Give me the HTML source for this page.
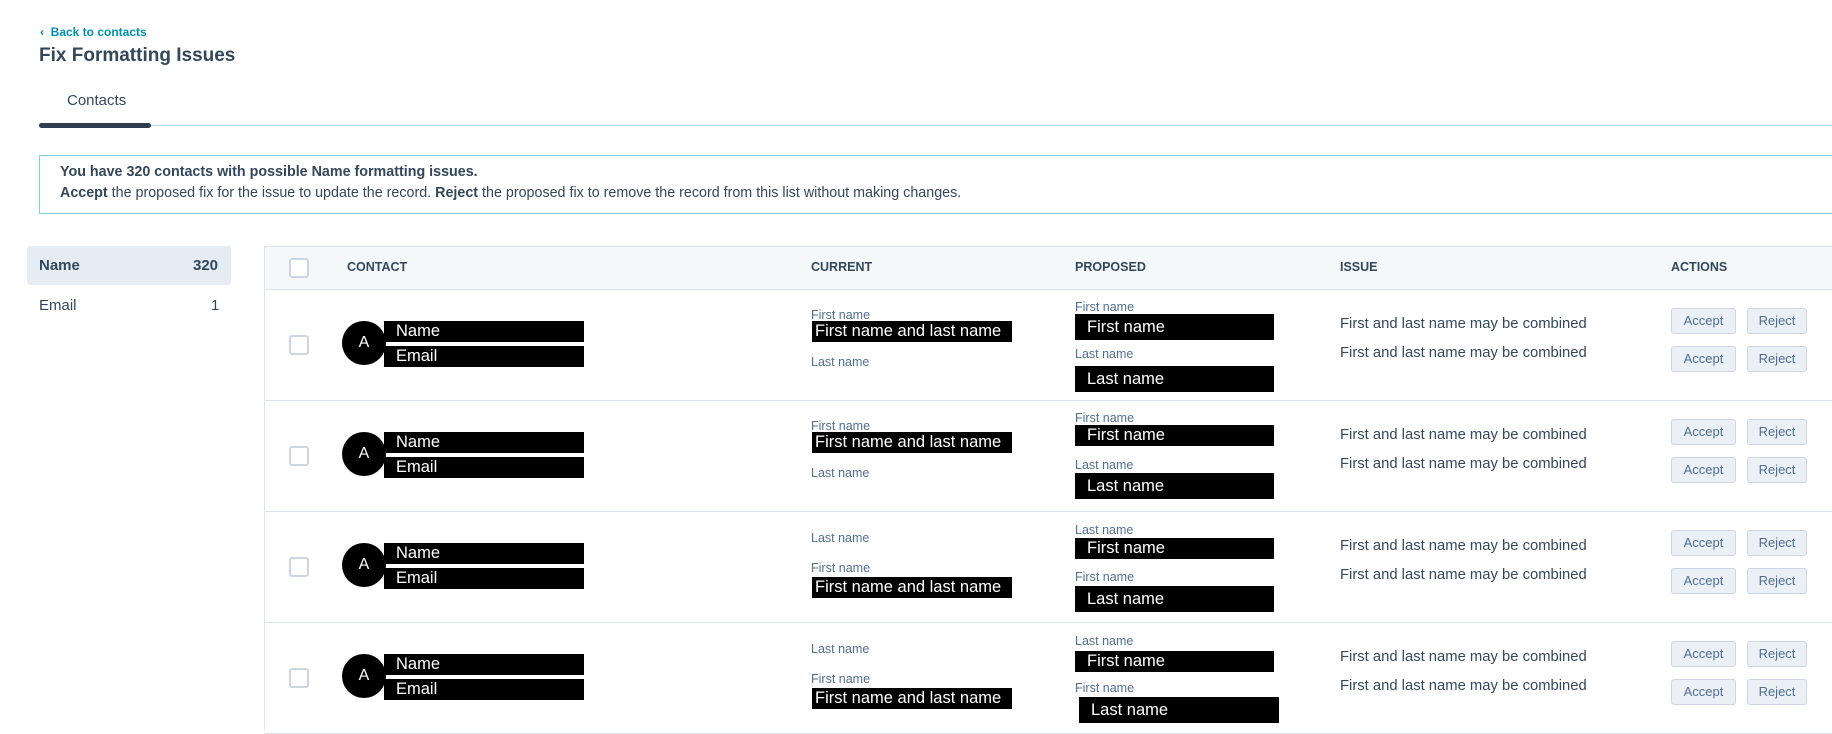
<!DOCTYPE html>
<html><head><meta charset="utf-8"><style>
*{margin:0;padding:0;box-sizing:border-box}
body{width:1832px;height:728px;overflow:hidden;background:#fff;font-family:"Liberation Sans",sans-serif;color:#33475b;position:relative}
.a{position:absolute;white-space:nowrap}
.lbl{font-size:12.5px;color:#516f90}
.blk{position:absolute;background:#000;color:#fff;font-size:16.5px;line-height:21px;padding-left:12px}
.iss{font-size:14.8px}
.btn{position:absolute;background:#eaf0f6;border:1px solid #cbd6e2;border-radius:3px;font-size:13px;color:#506e91;text-align:center;line-height:24px;height:26px}
.cb{position:absolute;width:20px;height:20px;border:2px solid #cbd6e2;border-radius:3px;background:#fff}
.row{position:absolute;left:264px;width:1568px;height:111px;border-bottom:1px solid #dfe3eb}
.av{position:absolute;left:78px;width:44px;height:44px;border-radius:50%;background:#000;color:#fff;font-size:16px;text-align:center;line-height:44px}
</style></head><body>
<div class="a" style="left:40px;top:25px;font-size:12px;color:#0091ae;font-weight:bold">‹&nbsp;&nbsp;Back to contacts</div>
<div class="a" style="left:39px;top:45px;font-size:19px;font-weight:bold;color:#33475b">Fix Formatting Issues</div>
<div class="a" style="left:67px;top:92px;font-size:15px">Contacts</div>
<div class="a" style="left:39px;top:125px;width:1793px;height:1px;background:#b0d9e3"></div>
<div class="a" style="left:39px;top:123px;width:112px;height:5px;border-radius:3px;background:#2d3e50"></div>
<div class="a" style="left:39px;top:155px;width:1800px;height:59px;border:1px solid #7fd1de"></div>
<div class="a" style="left:60px;top:164px;font-size:14.3px;font-weight:bold">You have 320 contacts with possible Name formatting issues.</div>
<div class="a" style="left:60px;top:185px;font-size:14.3px"><b>Accept</b> the proposed fix for the issue to update the record. <b>Reject</b> the proposed fix to remove the record from this list without making changes.</div>
<div class="a" style="left:27px;top:246px;width:204px;height:39px;background:#e5ecf3;border-radius:3px"></div>
<div class="a" style="left:39px;top:257px;font-size:15px;font-weight:bold">Name</div>
<div class="a" style="left:193px;top:257px;font-size:15px;font-weight:bold">320</div>
<div class="a" style="left:39px;top:297px;font-size:15px">Email</div>
<div class="a" style="left:211px;top:297px;font-size:15px">1</div>
<div class="a" style="left:264px;top:246px;width:1568px;height:44px;background:#f5f8fa;border:1px solid #dfe3eb;border-right:none"></div>
<div class="a" style="left:264px;top:290px;width:1px;height:440px;background:#dfe3eb"></div>
<div class="cb" style="left:289px;top:258px"></div>
<div class="a" style="left:347px;top:260px;font-size:12.5px;font-weight:bold">CONTACT</div>
<div class="a" style="left:811px;top:260px;font-size:12.5px;font-weight:bold">CURRENT</div>
<div class="a" style="left:1075px;top:260px;font-size:12.5px;font-weight:bold">PROPOSED</div>
<div class="a" style="left:1340px;top:260px;font-size:12.5px;font-weight:bold">ISSUE</div>
<div class="a" style="left:1671px;top:260px;font-size:12.5px;font-weight:bold">ACTIONS</div>

<!-- row 1 -->
<div class="row" style="top:290px">
<div class="cb" style="left:25px;top:45px"></div>
<div class="av" style="top:31px">A</div>
<div class="blk" style="left:120px;top:31px;width:200px">Name</div>
<div class="blk" style="left:120px;top:56px;width:200px">Email</div>
<div class="a lbl" style="left:547px;top:18px">First name</div>
<div class="blk" style="left:548px;top:31px;width:200px;padding-left:3px">First name and last name</div>
<div class="a lbl" style="left:547px;top:65px">Last name</div>
<div class="a lbl" style="left:811px;top:10px">First name</div>
<div class="blk" style="left:811px;top:24px;width:199px;line-height:26px">First name</div>
<div class="a lbl" style="left:811px;top:57px">Last name</div>
<div class="blk" style="left:811px;top:76px;width:199px;line-height:26px">Last name</div>
<div class="a iss" style="left:1076px;top:26px">First and last name may be combined</div>
<div class="a iss" style="left:1076px;top:55px">First and last name may be combined</div>
<div class="btn" style="left:1407px;top:18px;width:65px">Accept</div><div class="btn" style="left:1483px;top:18px;width:60px">Reject</div>
<div class="btn" style="left:1407px;top:56px;width:65px">Accept</div><div class="btn" style="left:1483px;top:56px;width:60px">Reject</div>
</div>
<!-- row 2 -->
<div class="row" style="top:401px">
<div class="cb" style="left:25px;top:45px"></div>
<div class="av" style="top:31px">A</div>
<div class="blk" style="left:120px;top:31px;width:200px">Name</div>
<div class="blk" style="left:120px;top:56px;width:200px">Email</div>
<div class="a lbl" style="left:547px;top:18px">First name</div>
<div class="blk" style="left:548px;top:31px;width:200px;padding-left:3px">First name and last name</div>
<div class="a lbl" style="left:547px;top:65px">Last name</div>
<div class="a lbl" style="left:811px;top:10px">First name</div>
<div class="blk" style="left:811px;top:24px;width:199px">First name</div>
<div class="a lbl" style="left:811px;top:57px">Last name</div>
<div class="blk" style="left:811px;top:72px;width:199px;line-height:26px">Last name</div>
<div class="a iss" style="left:1076px;top:26px">First and last name may be combined</div>
<div class="a iss" style="left:1076px;top:55px">First and last name may be combined</div>
<div class="btn" style="left:1407px;top:18px;width:65px">Accept</div><div class="btn" style="left:1483px;top:18px;width:60px">Reject</div>
<div class="btn" style="left:1407px;top:56px;width:65px">Accept</div><div class="btn" style="left:1483px;top:56px;width:60px">Reject</div>
</div>
<!-- row 3 -->
<div class="row" style="top:512px">
<div class="cb" style="left:25px;top:45px"></div>
<div class="av" style="top:31px">A</div>
<div class="blk" style="left:120px;top:31px;width:200px">Name</div>
<div class="blk" style="left:120px;top:56px;width:200px">Email</div>
<div class="a lbl" style="left:547px;top:19px">Last name</div>
<div class="a lbl" style="left:547px;top:49px">First name</div>
<div class="blk" style="left:548px;top:65px;width:200px;padding-left:3px">First name and last name</div>
<div class="a lbl" style="left:811px;top:11px">Last name</div>
<div class="blk" style="left:811px;top:26px;width:199px">First name</div>
<div class="a lbl" style="left:811px;top:58px">First name</div>
<div class="blk" style="left:811px;top:74px;width:199px;line-height:26px">Last name</div>
<div class="a iss" style="left:1076px;top:26px">First and last name may be combined</div>
<div class="a iss" style="left:1076px;top:55px">First and last name may be combined</div>
<div class="btn" style="left:1407px;top:18px;width:65px">Accept</div><div class="btn" style="left:1483px;top:18px;width:60px">Reject</div>
<div class="btn" style="left:1407px;top:56px;width:65px">Accept</div><div class="btn" style="left:1483px;top:56px;width:60px">Reject</div>
</div>
<!-- row 4 -->
<div class="row" style="top:623px">
<div class="cb" style="left:25px;top:45px"></div>
<div class="av" style="top:31px">A</div>
<div class="blk" style="left:120px;top:31px;width:200px">Name</div>
<div class="blk" style="left:120px;top:56px;width:200px">Email</div>
<div class="a lbl" style="left:547px;top:19px">Last name</div>
<div class="a lbl" style="left:547px;top:49px">First name</div>
<div class="blk" style="left:548px;top:65px;width:200px;padding-left:3px">First name and last name</div>
<div class="a lbl" style="left:811px;top:11px">Last name</div>
<div class="blk" style="left:811px;top:28px;width:199px">First name</div>
<div class="a lbl" style="left:811px;top:58px">First name</div>
<div class="blk" style="left:815px;top:74px;width:200px;line-height:26px">Last name</div>
<div class="a iss" style="left:1076px;top:26px">First and last name may be combined</div>
<div class="a iss" style="left:1076px;top:55px">First and last name may be combined</div>
<div class="btn" style="left:1407px;top:18px;width:65px">Accept</div><div class="btn" style="left:1483px;top:18px;width:60px">Reject</div>
<div class="btn" style="left:1407px;top:56px;width:65px">Accept</div><div class="btn" style="left:1483px;top:56px;width:60px">Reject</div>
</div>
</body></html>
